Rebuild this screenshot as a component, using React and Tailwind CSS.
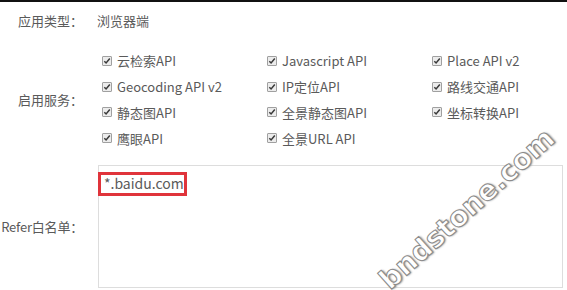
import React from "react";

const Check = () => (
  <span className="inline-flex items-center justify-center w-[10px] h-[10px] border border-[#a0a0a0] bg-[#ececec] rounded-[1px] shrink-0">
    <svg width="8" height="8" viewBox="0 0 8 8">
      <path d="M1.3 4.2 L3.1 6 L6.8 1.6" fill="none" stroke="#3a3a3a" strokeWidth="1.5" />
    </svg>
  </span>
);

const services = [
  "云检索API", "Javascript API", "Place API v2",
  "Geocoding API v2", "IP定位API", "路线交通API",
  "静态图API", "全景静态图API", "坐标转换API",
  "鹰眼API", "全景URL API",
];

export default function App() {
  return (
    <div className="relative w-[567px] h-[290px] overflow-hidden bg-white text-[13px] text-[#5a5a5a] font-['Microsoft_YaHei','Noto_Sans_CJK_SC',sans-serif]">
      <div className="h-[2px] bg-[#111]" />
      <div className="flex items-center h-[38px]">
        <div className="w-[83px] text-right whitespace-nowrap">应用类型：</div>
        <div className="pl-[14px]">浏览器端</div>
      </div>
      <div className="flex items-center mt-[8px] h-[103px]">
        <div className="w-[83px] text-right whitespace-nowrap">启用服务：</div>
        <div className="grid grid-cols-[165px_165px_130px] pl-[19px]">
          {services.map((s) => (
            <div key={s} className="flex items-center h-[25.7px] gap-[5px] whitespace-nowrap">
              <Check />
              <span className="leading-none">{s}</span>
            </div>
          ))}
        </div>
      </div>
      <div className="flex items-center mt-[14px]">
        <div className="w-[83px] text-right whitespace-nowrap tracking-[-0.2px]">Refer白名单：</div>
        <div className="ml-[15px] w-[465px] h-[123px] border border-[#ddd] pt-[6px] shrink-0">
          <div className="inline-block border-[3px] border-[#e0343b] px-[3px] h-[24px] leading-[17px] text-[14px] -ml-[1px] w-[89px] whitespace-nowrap">
            *.baidu.com
          </div>
        </div>
      </div>
      <div className="absolute left-[384px] top-[270px] -rotate-[42deg] origin-left text-[28px] font-bold text-white font-['DejaVu_Sans',sans-serif] [-webkit-text-stroke:1px_#8a8a8a] [text-shadow:1px_1px_2px_#888] whitespace-nowrap leading-none">
        bndstone.com
      </div>
    </div>
  );
}
